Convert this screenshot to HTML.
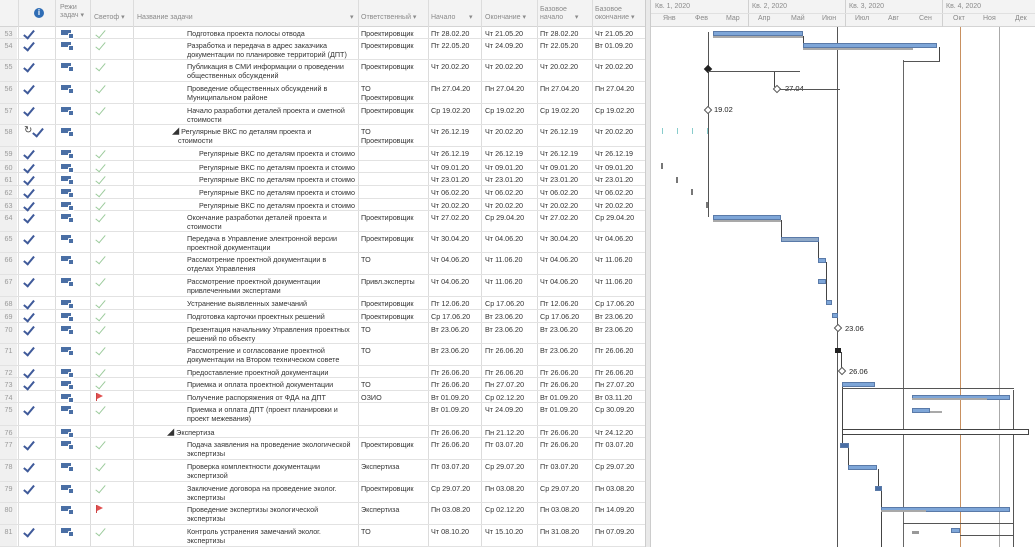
<!DOCTYPE html>
<html><head><meta charset="utf-8"><style>
*{margin:0;padding:0;box-sizing:border-box}
body{width:1035px;height:547px;overflow:hidden;background:#fff;font-family:"Liberation Sans","Noto Sans CJK SC",sans-serif;font-size:7.2px;color:#333;position:relative}
.hdr{position:absolute;top:0;left:0;width:645px;height:27px;background:#f3f3f3;border-bottom:1px solid #d4d4d4}
.h{position:absolute;color:#8a8a8a;font-size:7px;line-height:8px}
.vl{position:absolute;top:0;width:1px;height:547px;background:#dcdcdc}
.r{position:absolute;left:0;width:645px;border-bottom:1px solid #e2e2e2}
.r span{position:absolute;top:2px;line-height:9px;white-space:nowrap}
.n{left:0;width:17px;text-align:center;color:#999;background:#f0f0f0;height:100%;top:0!important;padding-top:2px}
.nm{left:187px;width:170px;white-space:normal!important}
.c,.g{font-size:0;width:10px;height:10px}
.c{left:23px}
.c:before,.g:before{content:"";position:absolute;left:3px;top:-1px;width:4px;height:9px;border-right:2px solid #3f5a9a;border-bottom:2px solid #3f5a9a;transform:rotate(40deg)}
.g{left:95px}
.g:before{border-color:#9ccb9c;border-width:0 1.3px 1.3px 0}
.fl{left:96px;top:2px!important;width:1px;height:8px;background:#c44}
.fl:after{content:"";position:absolute;left:1px;top:0;border-left:6px solid #e05050;border-top:3px solid transparent;border-bottom:3px solid transparent}
.md{left:61px;top:3px!important;width:10px;height:5px;background:#4a6fa5}
.md:after{content:"";position:absolute;right:-3px;top:3px;width:4px;height:4px;background:#4a6fa5;border:1px solid #fff;border-radius:1px}
.rs{left:361px}.s1{left:431px}.s2{left:485px}.s3{left:540px}.s4{left:595px}
.bar{position:absolute;background:#7ea6d8;border:1px solid #5a7aa8;height:5px}
.bl{position:absolute;background:#a9a9a9;height:2px}
.gl{position:absolute;width:1px;background:#444}
.hl{position:absolute;height:1px;background:#555}
.gh{position:absolute;color:#8a8a8a;font-size:7px}
</style></head><body>
<div class="hdr">
<div class="h" style="left:60px;top:4px">Режи<br>задач ▾</div>
<div style="position:absolute;left:34px;top:8px;width:10px;height:10px;border-radius:50%;background:#2f6db5;color:#fff;font-size:8px;font-weight:bold;text-align:center;line-height:10px">i</div>
<div class="h" style="left:94px;top:14px">Светоф ▾</div>
<div class="h" style="left:137px;top:14px">Название задачи</div>
<div class="h" style="left:350px;top:14px">▾</div>
<div class="h" style="left:361px;top:14px">Ответственный ▾</div>
<div class="h" style="left:431px;top:14px">Начало &nbsp;&nbsp;&nbsp;&nbsp;&nbsp;&nbsp;▾</div>
<div class="h" style="left:485px;top:14px">Окончание ▾</div>
<div class="h" style="left:540px;top:6px">Базовое<br>начало &nbsp;&nbsp;&nbsp;&nbsp;&nbsp;▾</div>
<div class="h" style="left:595px;top:6px">Базовое<br>окончание ▾</div>
</div>
<div class="vl" style="left:18px"></div><div class="vl" style="left:55px"></div><div class="vl" style="left:90px"></div><div class="vl" style="left:133px"></div><div class="vl" style="left:358px"></div><div class="vl" style="left:428px"></div><div class="vl" style="left:481px"></div><div class="vl" style="left:537px"></div><div class="vl" style="left:592px"></div>
<div style="position:absolute;left:645px;top:0;width:6px;height:547px;background:#e9e9e9;border-left:1px solid #ccc;border-right:1px solid #ccc"></div>

<div class="r" style="top:27px;height:12px"><span class="n">53</span><span class="c">✓</span><span class="md"></span><span class="g">✓</span><span class="nm">Подготовка проекта полосы отвода</span><span class="rs">Проектировщик</span><span class="s1">Пт 28.02.20</span><span class="s2">Чт 21.05.20</span><span class="s3">Пт 28.02.20</span><span class="s4">Чт 21.05.20</span></div>
<div class="r" style="top:39px;height:21px"><span class="n">54</span><span class="c">✓</span><span class="md"></span><span class="g">✓</span><span class="nm">Разработка и передача в адрес заказчика документации по планировке территорий (ДПТ)</span><span class="rs">Проектировщик</span><span class="s1">Пт 22.05.20</span><span class="s2">Чт 24.09.20</span><span class="s3">Пт 22.05.20</span><span class="s4">Вт 01.09.20</span></div>
<div class="r" style="top:60px;height:22px"><span class="n">55</span><span class="c">✓</span><span class="md"></span><span class="g">✓</span><span class="nm">Публикация в СМИ информации о проведении общественных обсуждений</span><span class="rs">Проектировщик</span><span class="s1">Чт 20.02.20</span><span class="s2">Чт 20.02.20</span><span class="s3">Чт 20.02.20</span><span class="s4">Чт 20.02.20</span></div>
<div class="r" style="top:82px;height:22px"><span class="n">56</span><span class="c">✓</span><span class="md"></span><span class="g">✓</span><span class="nm">Проведение общественных обсуждений в Муниципальном районе</span><span class="rs">ТО<br>Проектировщик</span><span class="s1">Пн 27.04.20</span><span class="s2">Пн 27.04.20</span><span class="s3">Пн 27.04.20</span><span class="s4">Пн 27.04.20</span></div>
<div class="r" style="top:104px;height:21px"><span class="n">57</span><span class="c">✓</span><span class="md"></span><span class="g">✓</span><span class="nm">Начало разработки деталей проекта и сметной стоимости</span><span class="rs">Проектировщик</span><span class="s1">Ср 19.02.20</span><span class="s2">Ср 19.02.20</span><span class="s3">Ср 19.02.20</span><span class="s4">Ср 19.02.20</span></div>
<div class="r" style="top:125px;height:22px"><span class="n">58</span><span style="left:24px;top:1px;font-size:10px;color:#444">↻</span><span class="c" style="left:32px">✓</span><span class="md"></span><span class="nm" style="left:172px;width:180px">◢ Регулярные ВКС по деталям проекта и<br>&nbsp;&nbsp;&nbsp;стоимости</span><span class="rs">ТО<br>Проектировщик</span><span class="s1">Чт 26.12.19</span><span class="s2">Чт 20.02.20</span><span class="s3">Чт 26.12.19</span><span class="s4">Чт 20.02.20</span></div>
<div class="r" style="top:147px;height:14px"><span class="n">59</span><span class="c">✓</span><span class="md"></span><span class="g">✓</span><span class="nm" style="left:199px;overflow:hidden;width:158px;white-space:nowrap!important">Регулярные ВКС по деталям проекта и стоимо</span><span class="s1">Чт 26.12.19</span><span class="s2">Чт 26.12.19</span><span class="s3">Чт 26.12.19</span><span class="s4">Чт 26.12.19</span></div>
<div class="r" style="top:161px;height:12px"><span class="n">60</span><span class="c">✓</span><span class="md"></span><span class="g">✓</span><span class="nm" style="left:199px;overflow:hidden;width:158px;white-space:nowrap!important">Регулярные ВКС по деталям проекта и стоимо</span><span class="s1">Чт 09.01.20</span><span class="s2">Чт 09.01.20</span><span class="s3">Чт 09.01.20</span><span class="s4">Чт 09.01.20</span></div>
<div class="r" style="top:173px;height:13px"><span class="n">61</span><span class="c">✓</span><span class="md"></span><span class="g">✓</span><span class="nm" style="left:199px;overflow:hidden;width:158px;white-space:nowrap!important">Регулярные ВКС по деталям проекта и стоимо</span><span class="s1">Чт 23.01.20</span><span class="s2">Чт 23.01.20</span><span class="s3">Чт 23.01.20</span><span class="s4">Чт 23.01.20</span></div>
<div class="r" style="top:186px;height:13px"><span class="n">62</span><span class="c">✓</span><span class="md"></span><span class="g">✓</span><span class="nm" style="left:199px;overflow:hidden;width:158px;white-space:nowrap!important">Регулярные ВКС по деталям проекта и стоимо</span><span class="s1">Чт 06.02.20</span><span class="s2">Чт 06.02.20</span><span class="s3">Чт 06.02.20</span><span class="s4">Чт 06.02.20</span></div>
<div class="r" style="top:199px;height:12px"><span class="n">63</span><span class="c">✓</span><span class="md"></span><span class="g">✓</span><span class="nm" style="left:199px;overflow:hidden;width:158px;white-space:nowrap!important">Регулярные ВКС по деталям проекта и стоимо</span><span class="s1">Чт 20.02.20</span><span class="s2">Чт 20.02.20</span><span class="s3">Чт 20.02.20</span><span class="s4">Чт 20.02.20</span></div>
<div class="r" style="top:211px;height:21px"><span class="n">64</span><span class="c">✓</span><span class="md"></span><span class="g">✓</span><span class="nm">Окончание разработки деталей проекта и стоимости</span><span class="rs">Проектировщик</span><span class="s1">Чт 27.02.20</span><span class="s2">Ср 29.04.20</span><span class="s3">Чт 27.02.20</span><span class="s4">Ср 29.04.20</span></div>
<div class="r" style="top:232px;height:21px"><span class="n">65</span><span class="c">✓</span><span class="md"></span><span class="g">✓</span><span class="nm">Передача в Управление электронной версии проектной документации</span><span class="rs">Проектировщик</span><span class="s1">Чт 30.04.20</span><span class="s2">Чт 04.06.20</span><span class="s3">Чт 30.04.20</span><span class="s4">Чт 04.06.20</span></div>
<div class="r" style="top:253px;height:22px"><span class="n">66</span><span class="c">✓</span><span class="md"></span><span class="g">✓</span><span class="nm" style="width:160px">Рассмотрение проектной документации в отделах Управления</span><span class="rs">ТО</span><span class="s1">Чт 04.06.20</span><span class="s2">Чт 11.06.20</span><span class="s3">Чт 04.06.20</span><span class="s4">Чт 11.06.20</span></div>
<div class="r" style="top:275px;height:22px"><span class="n">67</span><span class="c">✓</span><span class="md"></span><span class="g">✓</span><span class="nm">Рассмотрение проектной документации привлеченными экспертами</span><span class="rs">Привл.эксперты</span><span class="s1">Чт 04.06.20</span><span class="s2">Чт 11.06.20</span><span class="s3">Чт 04.06.20</span><span class="s4">Чт 11.06.20</span></div>
<div class="r" style="top:297px;height:13px"><span class="n">68</span><span class="c">✓</span><span class="md"></span><span class="g">✓</span><span class="nm">Устранение выявленных замечаний</span><span class="rs">Проектировщик</span><span class="s1">Пт 12.06.20</span><span class="s2">Ср 17.06.20</span><span class="s3">Пт 12.06.20</span><span class="s4">Ср 17.06.20</span></div>
<div class="r" style="top:310px;height:13px"><span class="n">69</span><span class="c">✓</span><span class="md"></span><span class="g">✓</span><span class="nm">Подготовка карточки проектных решений</span><span class="rs">Проектировщик</span><span class="s1">Ср 17.06.20</span><span class="s2">Вт 23.06.20</span><span class="s3">Ср 17.06.20</span><span class="s4">Вт 23.06.20</span></div>
<div class="r" style="top:323px;height:21px"><span class="n">70</span><span class="c">✓</span><span class="md"></span><span class="g">✓</span><span class="nm">Презентация начальнику Управления проектных решений по объекту</span><span class="rs">ТО</span><span class="s1">Вт 23.06.20</span><span class="s2">Вт 23.06.20</span><span class="s3">Вт 23.06.20</span><span class="s4">Вт 23.06.20</span></div>
<div class="r" style="top:344px;height:22px"><span class="n">71</span><span class="c">✓</span><span class="md"></span><span class="g">✓</span><span class="nm">Рассмотрение и согласование проектной документации на Втором техническом совете</span><span class="rs">ТО</span><span class="s1">Вт 23.06.20</span><span class="s2">Пт 26.06.20</span><span class="s3">Вт 23.06.20</span><span class="s4">Пт 26.06.20</span></div>
<div class="r" style="top:366px;height:12px"><span class="n">72</span><span class="c">✓</span><span class="md"></span><span class="g">✓</span><span class="nm">Предоставление проектной документации</span><span class="s1">Пт 26.06.20</span><span class="s2">Пт 26.06.20</span><span class="s3">Пт 26.06.20</span><span class="s4">Пт 26.06.20</span></div>
<div class="r" style="top:378px;height:13px"><span class="n">73</span><span class="c">✓</span><span class="md"></span><span class="g">✓</span><span class="nm">Приемка и оплата проектной документации</span><span class="rs">ТО</span><span class="s1">Пт 26.06.20</span><span class="s2">Пн 27.07.20</span><span class="s3">Пт 26.06.20</span><span class="s4">Пн 27.07.20</span></div>
<div class="r" style="top:391px;height:12px"><span class="n">74</span><span class="md"></span><span class="fl"></span><span class="nm">Получение распоряжения от ФДА на ДПТ</span><span class="rs">ОЗИО</span><span class="s1">Вт 01.09.20</span><span class="s2">Ср 02.12.20</span><span class="s3">Вт 01.09.20</span><span class="s4">Вт 03.11.20</span></div>
<div class="r" style="top:403px;height:23px"><span class="n">75</span><span class="c">✓</span><span class="md"></span><span class="g">✓</span><span class="nm">Приемка и оплата ДПТ (проект планировки и проект межевания)</span><span class="s1">Вт 01.09.20</span><span class="s2">Чт 24.09.20</span><span class="s3">Вт 01.09.20</span><span class="s4">Ср 30.09.20</span></div>
<div class="r" style="top:426px;height:12px"><span class="n">76</span><span class="md"></span><span class="nm" style="left:167px">◢ Экспертиза</span><span class="s1">Пт 26.06.20</span><span class="s2">Пн 21.12.20</span><span class="s3">Пт 26.06.20</span><span class="s4">Чт 24.12.20</span></div>
<div class="r" style="top:438px;height:22px"><span class="n">77</span><span class="c">✓</span><span class="md"></span><span class="g">✓</span><span class="nm">Подача заявления на проведение экологической экспертизы</span><span class="rs">Проектировщик</span><span class="s1">Пт 26.06.20</span><span class="s2">Пт 03.07.20</span><span class="s3">Пт 26.06.20</span><span class="s4">Пт 03.07.20</span></div>
<div class="r" style="top:460px;height:22px"><span class="n">78</span><span class="c">✓</span><span class="md"></span><span class="g">✓</span><span class="nm">Проверка комплектности документации экспертизой</span><span class="rs">Экспертиза</span><span class="s1">Пт 03.07.20</span><span class="s2">Ср 29.07.20</span><span class="s3">Пт 03.07.20</span><span class="s4">Ср 29.07.20</span></div>
<div class="r" style="top:482px;height:21px"><span class="n">79</span><span class="c">✓</span><span class="md"></span><span class="g">✓</span><span class="nm">Заключение договора на проведение эколог. экспертизы</span><span class="rs">Проектировщик</span><span class="s1">Ср 29.07.20</span><span class="s2">Пн 03.08.20</span><span class="s3">Ср 29.07.20</span><span class="s4">Пн 03.08.20</span></div>
<div class="r" style="top:503px;height:22px"><span class="n">80</span><span class="md"></span><span class="fl"></span><span class="nm">Проведение экспертизы экологической экспертизы</span><span class="rs">Экспертиза</span><span class="s1">Пн 03.08.20</span><span class="s2">Ср 02.12.20</span><span class="s3">Пн 03.08.20</span><span class="s4">Пн 14.09.20</span></div>
<div class="r" style="top:525px;height:22px"><span class="n">81</span><span class="c">✓</span><span class="md"></span><span class="g">✓</span><span class="nm">Контроль устранения замечаний эколог. экспертизы</span><span class="rs">ТО</span><span class="s1">Чт 08.10.20</span><span class="s2">Чт 15.10.20</span><span class="s3">Пн 31.08.20</span><span class="s4">Пн 07.09.20</span></div>

<!-- Gantt -->
<div style="position:absolute;left:651px;top:0;width:384px;height:27px;background:#f3f3f3;border-bottom:1px solid #d4d4d4"></div>
<div class="gh" style="left:655px;top:3px">Кв. 1, 2020</div><div class="gh" style="left:752px;top:3px">Кв. 2, 2020</div><div class="gh" style="left:849px;top:3px">Кв. 3, 2020</div><div class="gh" style="left:946px;top:3px">Кв. 4, 2020</div>
<div class="gh" style="left:663px;top:15px">Янв</div><div class="gh" style="left:695px;top:15px">Фев</div><div class="gh" style="left:726px;top:15px">Мар</div><div class="gh" style="left:758px;top:15px">Апр</div><div class="gh" style="left:791px;top:15px">Май</div><div class="gh" style="left:822px;top:15px">Июн</div><div class="gh" style="left:855px;top:15px">Июл</div><div class="gh" style="left:888px;top:15px">Авг</div><div class="gh" style="left:919px;top:15px">Сен</div><div class="gh" style="left:953px;top:15px">Окт</div><div class="gh" style="left:983px;top:15px">Ноя</div><div class="gh" style="left:1015px;top:15px">Дек</div>
<div style="position:absolute;left:748px;top:0;width:1px;height:27px;background:#d0d0d0"></div><div style="position:absolute;left:845px;top:0;width:1px;height:27px;background:#d0d0d0"></div><div style="position:absolute;left:942px;top:0;width:1px;height:27px;background:#d0d0d0"></div>
<div style="position:absolute;left:651px;top:13px;width:384px;height:1px;background:#e0e0e0"></div>
<!-- vertical gantt lines -->
<div class="gl" style="left:837px;top:27px;height:520px;background:#555"></div>
<div class="gl" style="left:903px;top:60px;height:487px;background:#666"></div>
<div class="gl" style="left:960px;top:27px;height:520px;background:#c89060"></div>
<div class="gl" style="left:999px;top:27px;height:520px;background:#aaa"></div>
<div class="gl" style="left:1013px;top:390px;height:157px;background:#555"></div>
<div class="gl" style="left:708px;top:32px;height:185px;background:#555"></div>
<!-- connectors -->
<div class="gl" style="left:803px;top:36px;height:9px"></div>
<div class="gl" style="left:939px;top:47px;height:14px"></div>
<div class="hl" style="left:903px;top:61px;width:37px"></div>
<div class="gl" style="left:774px;top:71px;height:16px"></div>
<div class="gl" style="left:781px;top:220px;height:18px"></div>
<div class="gl" style="left:818px;top:241px;height:18px"></div>
<div class="gl" style="left:826px;top:262px;height:40px"></div>
<div class="gl" style="left:841px;top:352px;height:16px"></div>
<div class="gl" style="left:842px;top:383px;height:60px"></div>
<div class="gl" style="left:848px;top:447px;height:20px"></div>
<div class="gl" style="left:878px;top:469px;height:18px"></div>
<div class="gl" style="left:881px;top:490px;height:57px"></div>
<div class="hl" style="left:903px;top:523px;width:110px"></div>
<div class="hl" style="left:960px;top:535px;width:53px"></div>
<!-- bars -->
<div class="bar" style="left:713px;top:31px;width:90px"></div><div class="bl" style="left:713px;top:36px;width:90px"></div>
<div class="bar" style="left:803px;top:43px;width:134px"></div><div class="bl" style="left:803px;top:48px;width:110px"></div>
<div style="position:absolute;left:705px;top:66px;width:6px;height:6px;background:#222;transform:rotate(45deg)"></div>
<div style="position:absolute;left:708px;top:71px;width:92px;height:1px;background:#555"></div>
<div style="position:absolute;left:774px;top:86px;width:6px;height:6px;border:1px solid #555;background:#fff;transform:rotate(45deg)"></div>
<div style="position:absolute;left:785px;top:84px;font-size:7.5px;color:#222">27.04</div>
<div style="position:absolute;left:780px;top:89px;width:60px;height:1px;background:#555"></div>
<div style="position:absolute;left:705px;top:107px;width:6px;height:6px;border:1px solid #555;background:#fff;transform:rotate(45deg)"></div>
<div style="position:absolute;left:714px;top:105px;font-size:7.5px;color:#222">19.02</div>
<div style="position:absolute;left:662px;top:128px;width:1px;height:6px;background:#8cc"></div><div style="position:absolute;left:677px;top:128px;width:1px;height:6px;background:#8cc"></div><div style="position:absolute;left:692px;top:128px;width:1px;height:6px;background:#8cc"></div><div style="position:absolute;left:707px;top:128px;width:1px;height:6px;background:#8cc"></div>
<div style="position:absolute;left:661px;top:163px;width:2px;height:6px;background:#777"></div><div style="position:absolute;left:676px;top:177px;width:2px;height:6px;background:#777"></div><div style="position:absolute;left:691px;top:189px;width:2px;height:6px;background:#777"></div><div style="position:absolute;left:706px;top:202px;width:2px;height:6px;background:#777"></div>
<div class="bar" style="left:713px;top:215px;width:68px"></div><div class="bl" style="left:713px;top:220px;width:68px"></div>
<div class="bar" style="left:781px;top:237px;width:38px;background:#8fa9c8"></div>
<div class="bar" style="left:818px;top:258px;width:8px"></div>
<div class="bar" style="left:818px;top:279px;width:8px"></div>
<div class="bar" style="left:826px;top:300px;width:6px"></div>
<div class="bar" style="left:832px;top:313px;width:6px"></div>
<div style="position:absolute;left:835px;top:325px;width:6px;height:6px;border:1px solid #555;background:#fff;transform:rotate(45deg)"></div>
<div style="position:absolute;left:845px;top:324px;font-size:7.5px;color:#222">23.06</div>
<div style="position:absolute;left:835px;top:348px;width:6px;height:5px;background:#222"></div>
<div style="position:absolute;left:839px;top:368px;width:6px;height:6px;border:1px solid #555;background:#fff;transform:rotate(45deg)"></div>
<div style="position:absolute;left:849px;top:367px;font-size:7.5px;color:#222">26.06</div>
<div class="bar" style="left:842px;top:382px;width:33px"></div>
<div style="position:absolute;left:842px;top:388px;width:172px;height:1px;background:#555"></div>
<div class="bar" style="left:912px;top:395px;width:98px"></div><div class="bl" style="left:912px;top:398px;width:75px"></div>
<div class="bar" style="left:912px;top:408px;width:18px"></div><div class="bl" style="left:930px;top:411px;width:12px"></div>
<div style="position:absolute;left:842px;top:429px;width:187px;height:6px;border:1px solid #444;background:#fff"></div>
<div class="bar" style="left:840px;top:443px;width:9px;background:#4a6fa5"></div>
<div class="bar" style="left:848px;top:465px;width:29px"></div>
<div class="bar" style="left:875px;top:486px;width:7px;background:#4a6fa5"></div>
<div class="bar" style="left:881px;top:507px;width:129px"></div><div class="bl" style="left:881px;top:510px;width:45px"></div>
<div style="position:absolute;left:912px;top:531px;width:7px;height:3px;background:#999"></div>
<div class="bar" style="left:951px;top:528px;width:9px"></div>
</body></html>
